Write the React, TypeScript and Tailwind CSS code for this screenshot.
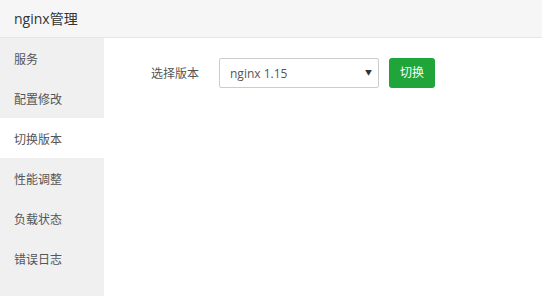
import React, { useState } from 'react'

const menu = ['服务', '配置修改', '切换版本', '性能调整', '负载状态', '错误日志']

export default function App() {
  const [active, setActive] = useState('切换版本')
  const [version, setVersion] = useState('nginx 1.15')

  return (
    <div
      className="w-[542px] h-[296px] flex flex-col bg-white overflow-hidden text-[#333]"
      style={{ fontFamily: '"Open Sans", "Noto Sans CJK SC", sans-serif' }}
    >
      <div className="h-[38px] shrink-0 flex items-center px-[14px] bg-[#f6f6f6] border-b border-[#e6e6e6] text-[14px]">
        nginx管理
      </div>
      <div className="flex flex-1">
        <div className="w-[104px] bg-[#f0f0f1] flex flex-col">
          {menu.map(m => (
            <div
              key={m}
              onClick={() => setActive(m)}
              className={`h-[40px] flex items-center pl-[14px] pt-[3px] text-[12px] text-[#555] cursor-pointer ${active === m ? 'bg-white' : ''}`}
            >
              {m}
            </div>
          ))}
        </div>
        <div className="flex-1 pl-[47px] pt-[20px]">
          <div className="flex items-center">
            <span className="text-[12px] text-[#555] w-[68px] pt-[1px]">选择版本</span>
            <div className="relative w-[160px] h-[30px]">
              <select
                value={version}
                onChange={e => setVersion(e.target.value)}
                className="appearance-none w-full h-full border border-[#ccc] rounded-[2px] bg-white pl-[10px] pt-[1px] text-[12px] text-[#555] outline-none"
              >
                <option>nginx 1.15</option>
                <option>nginx 1.14</option>
                <option>nginx 1.12</option>
              </select>
              <span className="absolute right-[7px] top-[10px] text-[7px] text-[#333] pointer-events-none">▼</span>
            </div>
            <button className="ml-[10px] h-[30px] w-[46px] rounded-[3px] bg-[#20a53a] text-white text-[12px]">
              切换
            </button>
          </div>
        </div>
      </div>
    </div>
  )
}
